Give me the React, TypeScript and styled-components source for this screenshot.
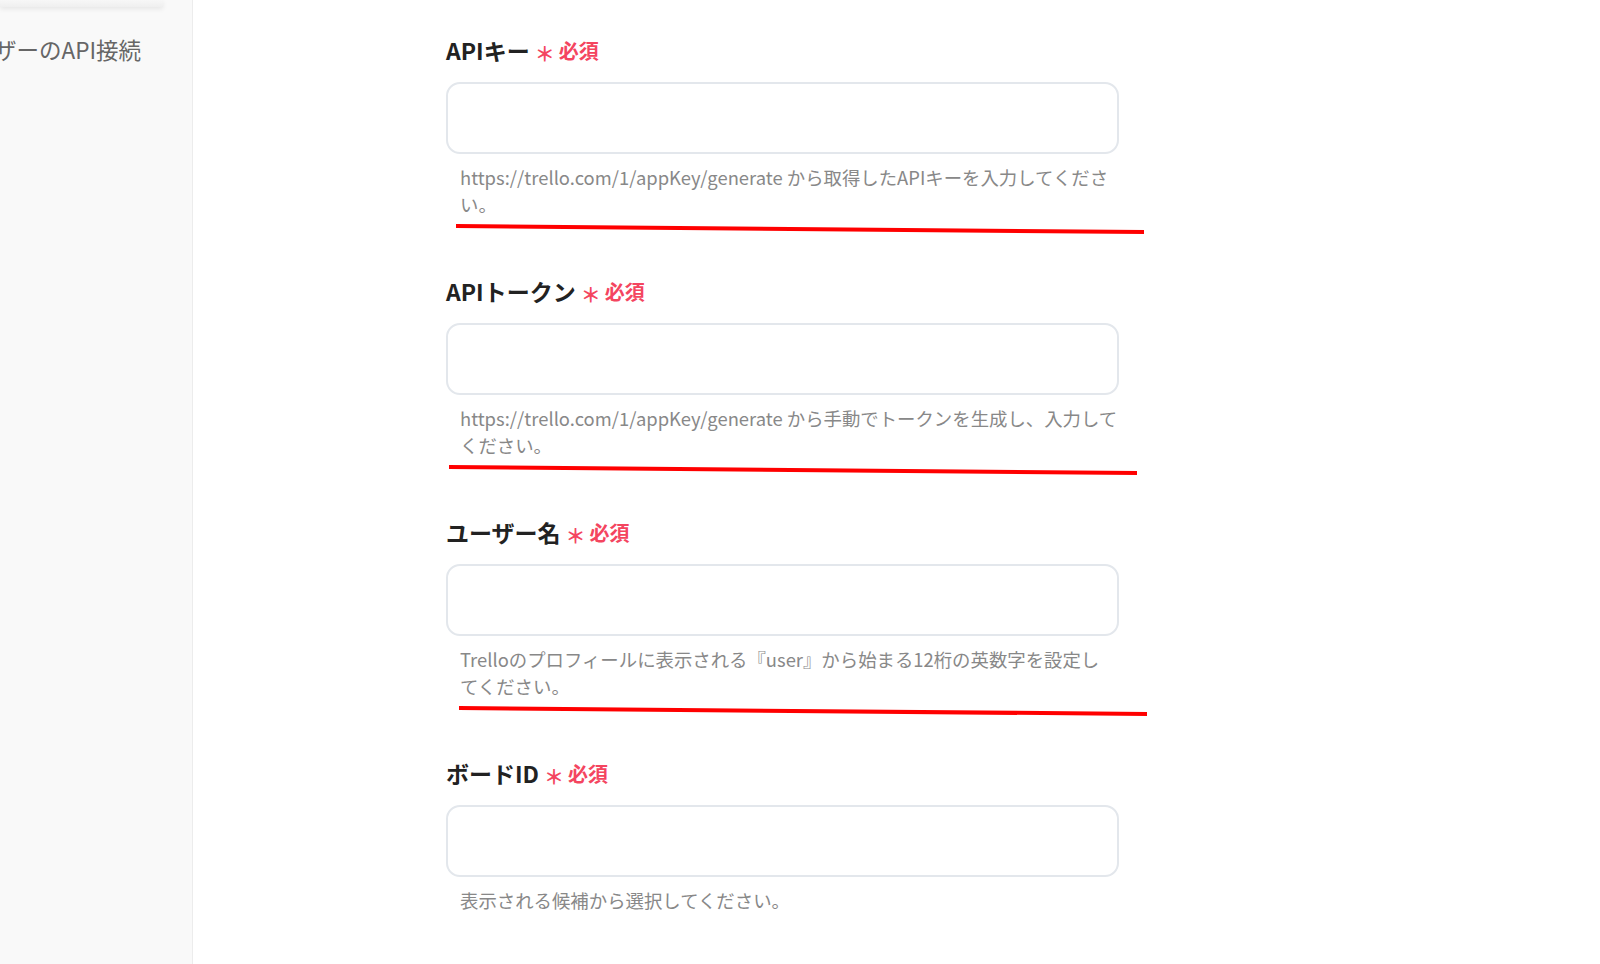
import React from 'react';
import styled, { createGlobalStyle } from 'styled-components';

const GlobalStyle = createGlobalStyle`
  html, body {
    margin: 0;
    padding: 0;
    background: #ffffff;
  }
  body {
    font-family: 'Noto Sans CJK JP', 'Noto Sans', sans-serif;
  }
`;

interface Field {
  label: string;
  hint: string;
  // offset of the hand drawn red underline, if any
  markOffset?: number;
}

const fields: Array<Field> = [
  {
    label: 'APIキー',
    hint: 'https://trello.com/1/appKey/generate から取得したAPIキーを入力してくださ\nい。',
    markOffset: 10,
  },
  {
    label: 'APIトークン',
    hint: 'https://trello.com/1/appKey/generate から手動でトークンを生成し、入力して\nください。',
    markOffset: 3,
  },
  {
    label: 'ユーザー名',
    hint: 'Trelloのプロフィールに表示される『user』から始まる12桁の英数字を設定し\nてください。',
    markOffset: 13,
  },
  {
    label: 'ボードID',
    hint: '表示される候補から選択してください。',
  },
];

export default function App() {
  return (
    <>
      <GlobalStyle />
      <Page>
        <Sidebar>
          <TopCard />
          <NavItem>ザーのAPI接続</NavItem>
        </Sidebar>
        <Main>
          <Form>
            {fields.map((field) => (
              <FieldBlock key={field.label}>
                <Label>
                  {field.label}
                  <Asterisk>＊</Asterisk>
                  <Required>必須</Required>
                </Label>
                <Input type="text" />
                <Hint>{field.hint}</Hint>
                {field.markOffset !== undefined && (
                  <Mark $offset={field.markOffset} viewBox="0 0 690 12" width={690} height={12}>
                    <line x1="0" y1="3" x2="688" y2="9" stroke="#ff0000" strokeWidth="4" />
                  </Mark>
                )}
              </FieldBlock>
            ))}
          </Form>
        </Main>
      </Page>
    </>
  );
}

const Page = styled.div`
  display: flex;
  height: 100vh;
  overflow: hidden;
`;

const Sidebar = styled.aside`
  width: 192px;
  flex-shrink: 0;
  background: #f9f9f9;
  border-right: 1px solid #ececec;
  box-shadow: 1px 0 3px rgba(0, 0, 0, 0.04);
  overflow: hidden;
`;

const TopCard = styled.div`
  width: 163px;
  height: 7px;
  background: linear-gradient(#f7f7f7, #efefef);
  box-shadow: 0 2px 5px rgba(0, 0, 0, 0.08);
`;

const NavItem = styled.div`
  margin: 26px 0 0 -6px;
  font-size: 22.5px;
  line-height: 32px;
  color: #666666;
  white-space: nowrap;
`;

const Main = styled.main`
  flex: 1;
  background: #ffffff;
  padding: 35px 0 0 253px;
`;

const Form = styled.div`
  width: 673px;
  display: flex;
  flex-direction: column;
  gap: 58px;
`;

const FieldBlock = styled.section`
  position: relative;
  display: flex;
  flex-direction: column;
`;

const Label = styled.div`
  display: flex;
  align-items: center;
  height: 30px;
  font-size: 23px;
  font-weight: 700;
  color: #222222;
`;

const Asterisk = styled.span`
  margin: 6px 4px 0 5px;
  font-size: 20px;
  font-weight: 700;
  color: #f4455f;
`;

const Required = styled.span`
  font-size: 20px;
  font-weight: 700;
  color: #f4455f;
`;

const Input = styled.input`
  box-sizing: border-box;
  margin-top: 17px;
  width: 100%;
  height: 72px;
  border: 2px solid #e3e7ec;
  border-radius: 14px;
  background: #ffffff;
  outline: none;
`;

const Hint = styled.p`
  margin: 10px 0 0;
  padding-left: 14px;
  font-size: 18.4px;
  line-height: 27px;
  color: #888888;
  white-space: pre-line;
`;

const Mark = styled.svg<{ $offset: number }>`
  position: absolute;
  top: 188px;
  left: ${(p) => p.$offset}px;
`;
